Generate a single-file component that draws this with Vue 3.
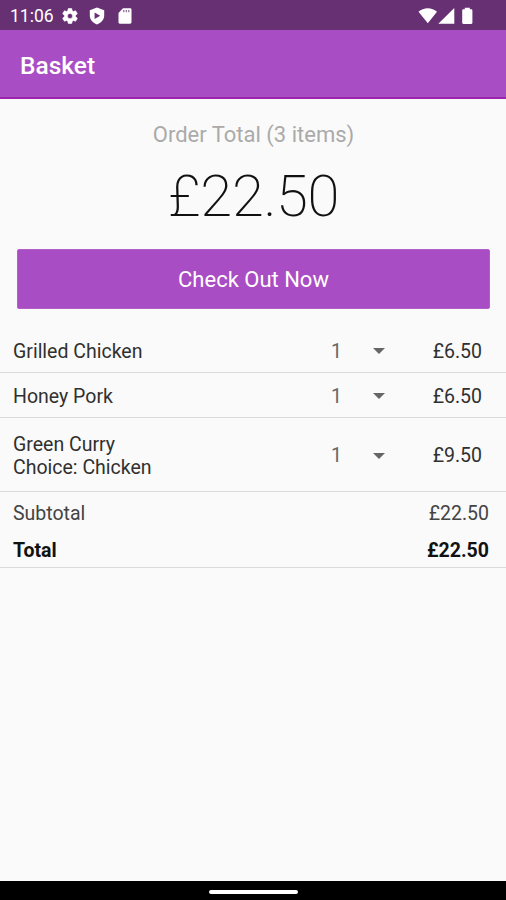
<script setup>
const items = [
  { name: 'Grilled Chicken', qty: 1, price: '£6.50' },
  { name: 'Honey Pork', qty: 1, price: '£6.50' },
  { name: 'Green Curry', choice: 'Choice: Chicken', qty: 1, price: '£9.50' }
]
</script>

<template>
  <div class="screen">
    <header class="status">
      <span class="clock">11:06</span>
      <svg class="gear" viewBox="0 0 24 24" width="18" height="18"><path fill="#fff" stroke="#fff" stroke-width=".8" fill-rule="evenodd" d="M19.4 13c.04-.3.1-.65.1-1s-.03-.7-.1-1l2.1-1.65c.2-.15.25-.4.12-.64l-2-3.46c-.12-.22-.39-.3-.61-.22l-2.49 1c-.52-.4-1.08-.73-1.69-.98l-.38-2.65A.49.49 0 0 0 14 2h-4c-.25 0-.46.18-.49.42l-.38 2.65c-.61.25-1.17.59-1.69.98l-2.49-1c-.23-.09-.49 0-.61.22l-2 3.46c-.13.22-.07.49.12.64L4.57 11c-.04.3-.07.65-.07 1s.03.7.07 1l-2.11 1.65c-.19.15-.24.42-.12.64l2 3.46c.12.22.39.3.61.22l2.49-1c.52.4 1.08.73 1.69.98l.38 2.65c.03.24.24.42.49.42h4c.25 0 .46-.18.49-.42l.38-2.65c.61-.25 1.17-.59 1.69-.98l2.49 1c.23.09.49 0 .61-.22l2-3.46c.12-.22.07-.49-.12-.64zM12 15.5a3.5 3.5 0 1 1 0-7 3.5 3.5 0 0 1 0 7z"/></svg>
      <svg class="shield" viewBox="0 0 16 18" width="16" height="18"><path fill="#fff" fill-rule="evenodd" d="M8 .6 15.200 3.200v5.300c0 4.200-3.100 7.500-7.200 8.900-4.100-1.400-7.200-4.700-7.200-8.900V3.200zM5.600 5.500v6.400L11.200 8.700z"/></svg>
      <svg class="card" viewBox="0 0 14 16" width="14" height="16"><path fill="#fff" d="M5 .3h7c.9 0 1.500.5 1.500 1.400v12.600c0 .9-.6 1.400-1.500 1.400H1.800c-.8 0-1.300-.5-1.300-1.400V5z"/><path stroke="#8d639a" stroke-width="1.200" d="M5.800 2v2.300M8.300 2v2.300M10.800 2v2.300"/></svg>
      <svg class="signals" viewBox="0 0 56 18" width="56" height="18"><path fill="#fff" d="M.5 4.800C5.500-.1 14-.1 19 4.800L9.800 16.200zM36.300 1v15.800H20.300zM46.800.8h5v1.500h1.400c.7 0 1.200.5 1.200 1.200v12.300c0 .7-.5 1.200-1.200 1.200h-7.800c-.7 0-1.200-.5-1.200-1.200V3.500c0-.7.5-1.200 1.200-1.200h1.400z"/></svg>
    </header>
    <div class="appbar"><h1>Basket</h1></div>
    <main>
      <p class="caption">Order Total (3 items)</p>
      <p class="amount">£22.50</p>
      <button class="checkout">Check Out Now</button>
      <ul class="items">
        <li v-for="item in items" :key="item.name" :class="{ tall: item.choice }">
          <div class="name">{{ item.name }}<div v-if="item.choice">{{ item.choice }}</div></div>
          <span class="qty">{{ item.qty }}</span>
          <svg class="caret" viewBox="0 0 12 6" width="12" height="6"><path fill="#666" d="M0 0h12L6 6z"/></svg>
          <span class="price">{{ item.price }}</span>
        </li>
      </ul>
      <section class="sums">
        <div class="sum"><span>Subtotal</span><span>£22.50</span></div>
        <div class="sum total"><span>Total</span><span>£22.50</span></div>
      </section>
    </main>
    <footer class="nav"><span class="pill"></span></footer>
  </div>
</template>

<style>
body { margin: 0; background: #fafafa; }
</style>

<style scoped>
.screen { width: 506px; height: 900px; display: flex; flex-direction: column; background: #fafafa; color: #303030; font-family: Roboto, sans-serif; overflow: hidden; }
.status { height: 30px; flex: none; box-sizing: border-box; display: flex; align-items: center; padding: 1px 32px 0 10px; background: #673073; color: #fff; }
.clock { width: 51px; font-size: 17.5px; line-height: 30px; }
.shield { margin-left: 10px; }
.card { margin-left: 13px; }
.signals { margin-left: auto; }
.appbar { height: 69px; flex: none; box-sizing: border-box; display: flex; align-items: center; padding: 5px 20px 0; background: #a94dc4; border-bottom: 2px solid #9b25ad; }
h1 { margin: 0; color: #fff; font-size: 24.5px; line-height: 32px; font-weight: 500; }
main { flex: 1; display: flex; flex-direction: column; }
p { margin: 0; text-align: center; }
.caption { margin-top: 22px; padding-left: 1px; color: #aaa; font-size: 22px; line-height: 28px; }
.amount { margin-top: 13px; padding-left: 1px; color: #111; font-size: 58px; line-height: 68px; font-weight: 200; letter-spacing: -0.4px; }
.checkout { height: 60px; margin: 19px 16px 0 17px; padding: 1px 0 0; border: 1px solid #b35fc9; border-radius: 2px; background: #a94dc4; color: #fff; font: 400 22px/57px Roboto, sans-serif; }
.items { list-style: none; margin: 19px 0 0; padding: 0; font-size: 19.5px; line-height: 23px; }
li { height: 45px; box-sizing: border-box; display: flex; align-items: center; padding: 2px 24px 0 13px; border-bottom: 1px solid #dadada; }
.tall { height: 74px; }
.name { flex: 1; }
.qty { width: 42px; color: #666; }
.caret { width: 12px; }
.price { width: 97px; text-align: right; }
.sums { padding: 3px 17px 0 13px; border-bottom: 1px solid #dadada; font-size: 19.5px; height: 72px; }
.sum { display: flex; justify-content: space-between; line-height: 37px; color: #444; }
.sum.total { color: #111; font-weight: 700; }
.nav { height: 19px; flex: none; display: flex; align-items: center; justify-content: center; background: #000; }
.pill { width: 89px; height: 4px; border-radius: 2px; background: #fff; margin-top: 2px; }
</style>
